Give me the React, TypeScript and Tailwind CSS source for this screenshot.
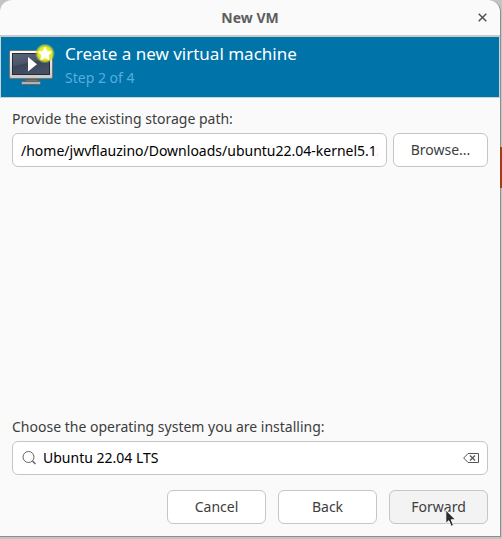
import { useState } from 'react';

const fieldBox = 'h-[34px] rounded-md border border-[#c6c6c6] bg-white';
const buttonBox =
  'h-[34px] rounded-md border border-[#c6c6c6] text-center text-[#3d3d3d]';

function MachineIcon() {
  return (
    <svg width="46" height="44" viewBox="0 0 46 44" aria-hidden="true">
      <defs>
        <linearGradient id="frame" x1="0" y1="0" x2="0" y2="1">
          <stop offset="0" stopColor="#fafafa" />
          <stop offset="1" stopColor="#c9c9c9" />
        </linearGradient>
        <linearGradient id="screen" x1="0" y1="0" x2="0.4" y2="1">
          <stop offset="0" stopColor="#5c6478" />
          <stop offset="0.5" stopColor="#4c566a" />
          <stop offset="0.55" stopColor="#3c4659" />
          <stop offset="1" stopColor="#465064" />
        </linearGradient>
        <linearGradient id="stand" x1="0" y1="0" x2="0" y2="1">
          <stop offset="0" stopColor="#555" />
          <stop offset="1" stopColor="#b5b5b5" />
        </linearGradient>
        <radialGradient id="glow">
          <stop offset="0" stopColor="#fdfd50" />
          <stop offset="0.65" stopColor="#e6ea10" />
          <stop offset="0.8" stopColor="#c8d830" stopOpacity="0.8" />
          <stop offset="1" stopColor="#a0cc50" stopOpacity="0" />
        </radialGradient>
      </defs>
      <rect x="17" y="35" width="12" height="5" fill="url(#stand)" />
      <rect x="12.5" y="37.5" width="19" height="3" rx="1" fill="#b4b4b4" stroke="#666" />
      <rect x="0.5" y="6.5" width="43" height="28" rx="1.5" fill="url(#frame)" stroke="#77736e" />
      <rect x="3.5" y="9.5" width="37" height="21" fill="url(#screen)" stroke="#232c3c" />
      <path d="M19 13v14.500l9-7.250z" fill="#fff" />
      <circle cx="36" cy="9.500" r="10" fill="url(#glow)" />
      <path
        d="M36 3l2 4.300 4.700.6-3.400 3.300.9 4.700-4.200-2.300-4.200 2.300.9-4.700-3.400-3.300 4.700-.6z"
        fill="#fff"
        stroke="#fff"
        strokeWidth="0.700"
        strokeLinejoin="round"
      />
    </svg>
  );
}

export default function App() {
  const [path, setPath] = useState(
    '/home/jwvflauzino/Downloads/ubuntu22.04-kernel5.15.qcow2',
  );
  const [system, setSystem] = useState('Ubuntu 22.04 LTS');

  return (
    <div className="relative flex min-h-screen flex-col bg-[#c4c4c4] pr-px pb-0.5 font-['Noto_Sans',sans-serif] text-sm leading-5 text-[#3d3d3d]">
      <div className="absolute top-[147px] right-0 h-[41px] w-0.5 bg-[#a63c17]" />
      <main className="flex grow flex-col rounded-t-xl border-r border-b border-[#8e8e8e] bg-[#fafafa]">
        <header className="relative flex h-[37px] items-center justify-center border-b-2 border-[#c9c9c9]">
          <h1 className="font-bold text-[#5e5e5e]">New VM</h1>
          <button type="button" aria-label="Close" className="absolute right-3 flex h-4 w-3 items-center justify-center">
            <svg width="9" height="9" viewBox="0 0 9 9" fill="none" stroke="#505050" strokeWidth="1.500" aria-hidden="true">
              <path d="M.7.7l7.600 7.600M8.300.7L.7 8.300" />
            </svg>
          </button>
        </header>

        <section className="flex h-[61px] border border-t-0 border-[#c9d3d8] bg-[#0073a9] pt-[7px] pl-2">
          <MachineIcon />
          <div className="-mt-0.5 flex flex-col gap-0.5 pl-[10px]">
            <h2 className="text-[17px] leading-6 text-white">Create a new virtual machine</h2>
            <p className="text-[#56aede]">Step 2 of 4</p>
          </div>
        </section>

        <form className="flex grow flex-col px-3 pt-[11px] pb-3" onSubmit={(e) => e.preventDefault()}>
          <label htmlFor="path">Provide the existing storage path:</label>
          <div className="mt-1 flex gap-1.5">
            <input
              id="path"
              value={path}
              onChange={(e) => setPath(e.target.value)}
              className={`${fieldBox} min-w-0 grow px-2 text-black outline-none`}
            />
            <button type="button" className={`${buttonBox} w-[95px] bg-white`}>
              Browse...
            </button>
          </div>

          <label htmlFor="system" className="mt-auto">
            Choose the operating system you are installing:
          </label>
          <div className={`${fieldBox} mt-1 flex items-center pr-2 pl-[9px]`}>
            <svg width="16" height="16" viewBox="0 0 16 16" fill="none" stroke="#666" aria-hidden="true">
              <circle cx="6.500" cy="7" r="5.500" />
              <path d="M10.500 11l3 3" strokeWidth="1.500" />
            </svg>
            <input
              id="system"
              value={system}
              onChange={(e) => setSystem(e.target.value)}
              className="min-w-0 grow pl-[5px] text-black outline-none"
            />
            <button type="button" aria-label="Clear" onClick={() => setSystem('')}>
              <svg width="16" height="10" viewBox="0 0 16 10" fill="none" stroke="#555" aria-hidden="true">
                <path d="M5 .5h10.500v9H5L.7 5z" />
                <path d="M7 2.500l5 5M12 2.500l-5 5" strokeWidth="1.200" />
              </svg>
            </button>
          </div>

          <div className="mt-[15px] flex justify-end gap-3">
            <button type="button" className={`${buttonBox} w-[99px] bg-white`}>
              Cancel
            </button>
            <button type="button" className={`${buttonBox} w-[99px] bg-white`}>
              Back
            </button>
            <button type="submit" className={`${buttonBox} relative w-[99px] bg-[#f3f3f3]`}>
              Forward
              <svg className="absolute top-[18px] left-[55px]" width="12" height="19" viewBox="0 0 12 19" aria-hidden="true">
                <path
                  d="M.8 1v13.500l3-2.800 2.400 5.600 2.400-1-2.400-5.500h4.400z"
                  fill="#2b2b2b"
                  stroke="#fff"
                />
              </svg>
            </button>
          </div>
        </form>
      </main>
    </div>
  );
}
